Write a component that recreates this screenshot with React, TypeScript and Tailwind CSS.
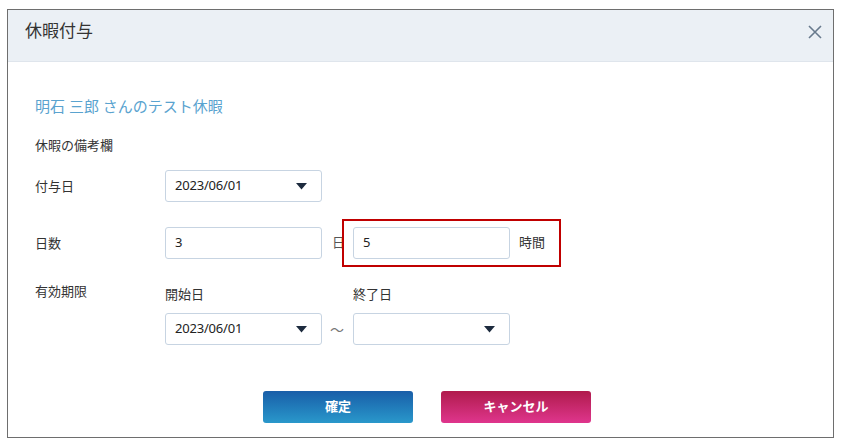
import React from "react";

const font = "font-['Noto_Sans','Noto_Sans_CJK_JP',sans-serif]";

/* ========== SELECT-LIKE DATE BOX ========== */
function DateSelect({ value }: { value?: string }) {
  return (
    <div className="flex h-[32px] w-[157px] items-center justify-between rounded-[3px] border border-[#c7d4e2] bg-white pl-[9px] pr-[14px]">
      <span className="text-[13px] tracking-[-0.2px] text-[#222]">{value ?? ""}</span>
      <svg width="11" height="7" viewBox="0 0 11 7">
        <path d="M0 0 H11 L5.5 6.5 Z" fill="#1d2b3e" />
      </svg>
    </div>
  );
}

function TextBox({ value }: { value: string }) {
  return (
    <div className="flex h-[32px] w-[157px] items-center rounded-[3px] border border-[#c7d4e2] bg-white pl-[9px] text-[13px] text-[#222]">
      {value}
    </div>
  );
}

export default function App() {
  return (
    <div className={`min-h-[443px] w-[841px] bg-white pt-[9px] pl-[7px] ${font}`}>
      <div className="flex h-[429px] w-[827px] flex-col border border-[#6e6e6e] bg-white">
        {/* header */}
        <div className="flex h-[52px] items-start justify-between border-b border-[#dfe5ec] bg-[#ebf0f5] pl-[17px] pr-[11px]">
          <h1 className="mt-[9px] text-[17px] leading-[24px] text-[#333]">休暇付与</h1>
          <svg className="mt-[15px]" width="14" height="14" viewBox="0 0 14 14">
            <path d="M1 1 L13 13 M13 1 L1 13" stroke="#687a8d" strokeWidth="1.6" />
          </svg>
        </div>

        {/* body */}
        <div className="flex flex-col px-[27px] pt-[33px] text-[13px] text-[#333]">
          <div className="text-[15px] leading-[22px] text-[#5aa3cf]">明石 三郎 さんのテスト休暇</div>
          <div className="mt-[18px] leading-[20px]">休暇の備考欄</div>

          <div className="mt-[15px] flex items-center">
            <div className="w-[130px] pt-[2px]">付与日</div>
            <DateSelect value="2023/06/01" />
          </div>

          <div className="mt-[25px] flex items-center">
            <div className="w-[130px] pt-[2px]">日数</div>
            <TextBox value="3" />
            <span className="ml-[10px] text-[#555]">日</span>
            <div className="relative ml-[8px] flex items-center">
              <TextBox value="5" />
              <span className="ml-[9px]">時間</span>
              <div className="pointer-events-none absolute -left-[11px] -top-[8px] -right-[16px] -bottom-[8px] border-2 border-[#c00000]" />
            </div>
          </div>

          <div className="mt-[22px] flex">
            <div className="w-[130px] leading-[20px]">有効期限</div>
            <div className="flex flex-col">
              <div className="mt-[3px] flex leading-[20px]">
                <div className="w-[188px]">開始日</div>
                <div>終了日</div>
              </div>
              <div className="mt-[9px] flex items-center">
                <DateSelect value="2023/06/01" />
                <span className="ml-[8px] mr-[9px] text-[14px] text-[#777]">～</span>
                <DateSelect />
              </div>
            </div>
          </div>

          <div className="mt-[46px] flex gap-[28px] pl-[228px]">
            <button className="h-[32px] w-[150px] rounded-[3px] bg-gradient-to-b from-[#1a5ea8] to-[#2a98cb] text-[13px] font-bold text-white">
              確定
            </button>
            <button className="h-[32px] w-[150px] rounded-[3px] bg-gradient-to-b from-[#b01a4c] to-[#df358d] text-[13px] font-bold text-white">
              キャンセル
            </button>
          </div>
        </div>
      </div>
    </div>
  );
}
